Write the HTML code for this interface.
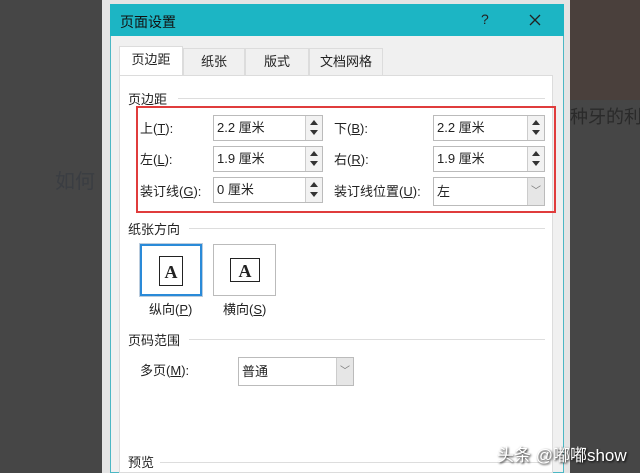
<!DOCTYPE html>
<html><head><meta charset="utf-8"><style>
*{box-sizing:border-box;margin:0;padding:0}
body{width:640px;height:473px;overflow:hidden;background:#464646;font-family:"Liberation Sans","Noto Sans CJK SC",sans-serif;font-size:13px;color:#222;position:relative}
.a{position:absolute;white-space:nowrap}
.lbl{position:absolute;font-size:13px;color:#222;line-height:16px;white-space:nowrap}
.inp{position:absolute;height:26px;background:#fff;border:1px solid #bbb;font-size:13px;line-height:24px;padding-left:3px;white-space:nowrap}
.spin{position:absolute;right:0;top:0;width:17px;height:24px;border-left:1px solid #ccc;background:#f2f2f2}
.spin:before{content:"";position:absolute;left:4px;top:4px;border:4px solid transparent;border-bottom:5px solid #333;border-top:0}
.spin:after{content:"";position:absolute;left:4px;top:14px;border:4px solid transparent;border-top:5px solid #333;border-bottom:0}
.dd{position:absolute;right:0;top:0;width:17px;height:100%;background:#e6e6e6;border-left:1px solid #ccc;color:#777;font-size:10px;text-align:center}
.sec{position:absolute;left:128px;font-size:13px;color:#222;white-space:nowrap}
.line{position:absolute;height:1px;background:#ddd}
u{text-decoration:underline}
.tab{position:absolute;top:48px;height:27px;background:#f0f0f0;border:1px solid #dcdcdc;border-bottom:none;text-align:center;line-height:26px;font-size:13px}
</style></head><body>
<div class="a" style="left:570px;top:0;width:70px;height:100px;background:#4a403c"></div>
<div class="a" style="left:570px;top:103px;font-size:18px;color:#2a2a2a">种牙的利</div>
<div class="a" style="left:55px;top:165px;font-size:20px;color:#3a3d42">如何</div>
<div class="a" style="left:102px;top:0;width:468px;height:473px;background:#e4e4e4"></div>
<div class="a" style="left:110px;top:4px;width:454px;height:469px;background:#f0f0f0;border:1px solid #4bb7c4"></div>
<div class="a" style="left:110px;top:4px;width:454px;height:32px;background:#1cb5c4"></div>
<div class="a" style="left:120px;top:12px;font-size:14px;color:#111">页面设置</div>
<div class="a" style="left:481px;top:11px;font-size:14px;color:#222">?</div>
<svg class="a" style="left:529px;top:14px" width="12" height="12"><path d="M1 1L11 11M11 1L1 11" stroke="#222" stroke-width="1.3"/></svg>
<div class="a" style="left:119px;top:75px;width:434px;height:398px;background:#fff;border:1px solid #dcdcdc"></div>
<div class="tab" style="left:119px;width:64px;height:29px;background:#fff;top:46px">页边距</div>
<div class="tab" style="left:183px;width:62px">纸张</div>
<div class="tab" style="left:245px;width:64px">版式</div>
<div class="tab" style="left:309px;width:74px">文档网格</div>

<div class="sec" style="top:89px">页边距</div><div class="line" style="left:178px;top:98px;width:367px"></div>
<div class="a" style="left:136px;top:106px;width:420px;height:107px;border:2px solid #e03c3c"></div>
<div class="lbl" style="left:140px;top:121px">上(<u>T</u>):</div>
<div class="inp" style="left:213px;top:115px;width:110px">2.2 厘米<div class="spin"></div></div>
<div class="lbl" style="left:334px;top:121px">下(<u>B</u>):</div>
<div class="inp" style="left:433px;top:115px;width:112px">2.2 厘米<div class="spin"></div></div>
<div class="lbl" style="left:140px;top:152px">左(<u>L</u>):</div>
<div class="inp" style="left:213px;top:146px;width:110px">1.9 厘米<div class="spin"></div></div>
<div class="lbl" style="left:334px;top:152px">右(<u>R</u>):</div>
<div class="inp" style="left:433px;top:146px;width:112px">1.9 厘米<div class="spin"></div></div>
<div class="lbl" style="left:140px;top:184px">装订线(<u>G</u>):</div>
<div class="inp" style="left:213px;top:177px;width:110px">0 厘米<div class="spin"></div></div>
<div class="lbl" style="left:334px;top:184px">装订线位置(<u>U</u>):</div>
<div class="inp" style="left:433px;top:177px;width:112px;height:29px;line-height:27px">左<div class="dd" style="line-height:27px">﹀</div></div>

<div class="sec" style="top:219px">纸张方向</div><div class="line" style="left:189px;top:228px;width:356px"></div>
<div class="a" style="left:140px;top:244px;width:62px;height:52px;border:2px solid #2a8ad8;outline:1px solid #bcd;"></div>
<div class="a" style="left:159px;top:256px;width:24px;height:30px;border:1px solid #222;background:#fff;font-family:'Liberation Serif',serif;font-weight:bold;font-size:18px;text-align:center;line-height:30px">A</div>
<div class="a" style="left:213px;top:244px;width:63px;height:52px;border:1px solid #bbb"></div>
<div class="a" style="left:230px;top:258px;width:30px;height:24px;border:1px solid #222;background:#fff;font-family:'Liberation Serif',serif;font-weight:bold;font-size:18px;text-align:center;line-height:24px">A</div>
<div class="lbl" style="left:149px;top:302px">纵向(<u>P</u>)</div>
<div class="lbl" style="left:223px;top:302px">横向(<u>S</u>)</div>

<div class="sec" style="top:330px">页码范围</div><div class="line" style="left:189px;top:339px;width:356px"></div>
<div class="lbl" style="left:140px;top:363px">多页(<u>M</u>):</div>
<div class="inp" style="left:238px;top:357px;width:116px;height:29px;line-height:27px">普通<div class="dd" style="line-height:27px">﹀</div></div>

<div class="sec" style="top:452px">预览</div><div class="line" style="left:160px;top:462px;width:385px"></div>
<div class="a" style="left:497px;top:441px;font-size:17px;color:#fff;text-shadow:1px 1px 2px #000">头条 @嘟嘟show</div>
</body></html>
